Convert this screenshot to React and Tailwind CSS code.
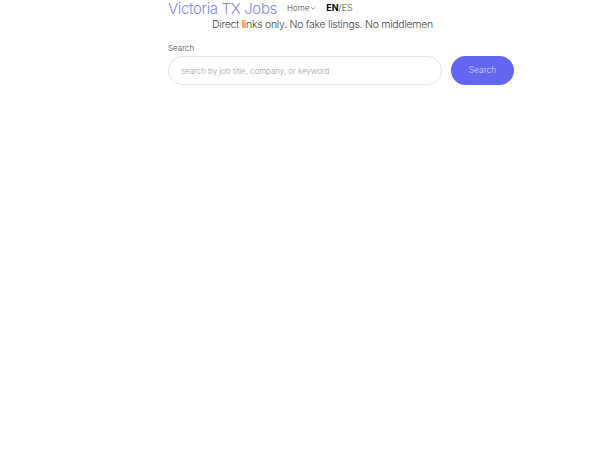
import React from "react";

export default function App() {
  return (
    <div className="w-[600px] h-[450px] bg-white" style={{ fontFamily: "Inter, 'Noto Sans', sans-serif" }}>
      <div className="ml-[168px] w-[346px] flex flex-col">
        <div className="flex items-center h-[17px]">
          <span className="text-[15px] leading-none text-[#8487e4] tracking-[-0.35px] font-light">Victoria TX Jobs</span>
          <span className="ml-[10px] text-[8px] text-[#444] flex items-center -mt-[2px] font-light">
            Home
            <svg width="6" height="6" viewBox="0 0 10 10" className="ml-[1px]">
              <path d="M2 4 L5 7 L8 4" fill="none" stroke="#555" strokeWidth="1.2" />
            </svg>
          </span>
          <span className="ml-[10px] text-[9px] text-[#444] -mt-[2px] font-light">
            <span className="font-bold text-black">EN</span>/ES
          </span>
        </div>
        <div className="ml-[44px] mt-[1px] text-[10.5px] text-[#444] leading-[13px] tracking-[-0.28px] font-light">
          Direct links only. No fake listings. No middlemen
        </div>
        <div className="mt-[12px] text-[8px] text-[#444] leading-[10px] font-light">Search</div>
        <div className="mt-[3px] flex items-center gap-[9px]">
          <div className="w-[274px] h-[29px] rounded-full border border-[#e4e4e4] flex items-center px-[12px]">
            <span className="text-[8px] text-[#a0a0a0] font-light tracking-[-0.05px]">search by job title, company, or keyword</span>
          </div>
          <button className="w-[63px] h-[29px] rounded-full bg-[#6366f1] text-[#d6d7ff] text-[8.5px] font-light flex items-center justify-center">
            Search
          </button>
        </div>
      </div>
    </div>
  );
}
